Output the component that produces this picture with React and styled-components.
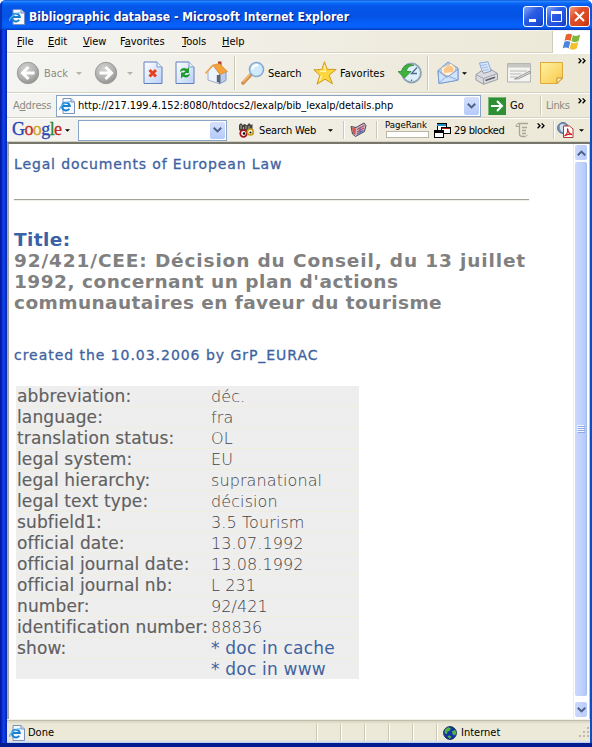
import React from 'react';
import styled, { createGlobalStyle } from 'styled-components';

const ui = '"DejaVu Sans Condensed", "DejaVu Sans", sans-serif';
const page = '"DejaVu Sans", sans-serif';

const Global = createGlobalStyle`
  * { box-sizing: border-box; }
  body { margin: 0; background: #fff; font: 11px ${ui}; color: #000; }
  svg { display: block; flex: none; }
`;

const Window = styled.div`
  width: 592px;
  height: 747px;
  display: flex;
  flex-direction: column;
  overflow: hidden;
  border-radius: 6px 6px 0 0;
  background: #0a3ad8;
`;

const TitleBar = styled.header`
  height: 30px;
  flex: none;
  display: flex;
  align-items: center;
  padding: 3px 2px 0 9px;
  background: linear-gradient(#0a54dc 0, #2f8cff 1px, #0a6af8 3px, #0558ea 6px, #0453e4 16px, #0660fb 24px, #0660fb 27px, #0340c0 30px);
  box-shadow: inset 2px 0 1px #0831b8;
`;

const TitleText = styled.h1`
  flex: 1;
  margin: 0 0 0 4px;
  color: #fff;
  font: bold 12px ${ui};
  letter-spacing: 0.04px;
  text-shadow: 1px 1px 1px #0a1883;
  white-space: nowrap;
`;

const WinButton = styled.button`
  width: 21px;
  height: 21px;
  margin: 0 0 0 2px;
  padding: 0;
  display: grid;
  place-items: center;
  border: 1px solid #fff;
  border-radius: 3px;
  background: ${p => p.$close
    ? 'linear-gradient(135deg, #f0a080, #e0502c 35%, #d8441c 75%, #b8300c)'
    : 'linear-gradient(135deg, #86a8f8, #2c5ce4 40%, #1f50dc 75%, #1038b0)'};
`;

const Frame = styled.div`
  flex: 1;
  min-height: 0;
  display: flex;
  flex-direction: column;
  padding: 0 2px 4px 7px;
  background:
    linear-gradient(90deg, #0019a4 0 1px, #0a2fd0 2px, #1048ee 4px, #0a32d0 5px, #0626b8 7px, #0a3ad8 7px 590px, #0a4fc4 590px) 0 0 / 100% calc(100% - 4px) no-repeat,
    linear-gradient(#0a3ad8, #001c90);
`;

const Bar = styled.div`
  height: ${p => p.$h}px;
  flex: none;
  display: flex;
  align-items: center;
  background: linear-gradient(90deg, #f4f4f2, #eeebdd 70%, #ece9d8);
  border-top: 1px solid ${p => (p.$first ? '#f4f3ee' : '#fff')};
  border-bottom: 1px solid #d5d2c2;
`;

const MenuItem = styled.span`
  width: ${p => p.$w}px;
  flex: none;
  white-space: nowrap;
  &::first-letter { text-decoration: ${p => (p.$plain ? 'none' : 'underline')}; }
  &:first-child { margin-left: 10px; }
`;

const FlagBox = styled.div`
  width: 38px;
  height: 22px;
  margin-left: auto;
  display: grid;
  place-items: center;
  background: #fff;
  border-left: 1px solid #d0cdbd;
`;

/* A toolbar entry: $gap is the space before it, $w its own width. */
const Slot = styled.span`
  flex: none;
  width: ${p => p.$w}px;
  margin-left: ${p => p.$gap || 0}px;
  display: flex;
  align-items: center;
  white-space: nowrap;
  letter-spacing: ${p => p.$ls || 0}px;
  color: ${p => (p.$dim ? '#8d8b80' : '#000')};
`;

const Chevron = styled(Slot)`
  align-self: flex-start;
  margin-top: ${p => p.$top}px;
`;

const Separator = styled.i`
  flex: none;
  width: 2px;
  align-self: stretch;
  margin: ${p => p.$inset || 2}px 0 ${p => p.$inset || 2}px ${p => p.$gap}px;
  border-left: 1px solid #cbc8b6;
  border-right: 1px solid #fff;
`;

const Field = styled.div`
  flex: none;
  width: ${p => p.$w}px;
  height: ${p => p.$h}px;
  margin-left: ${p => p.$gap}px;
  padding: 1px;
  display: flex;
  align-items: center;
  justify-content: space-between;
  background: #fff;
  border: 1px solid #8aa4c8;
`;

const Url = styled.span`
  flex: 1;
  margin-left: 3px;
  letter-spacing: -0.05px;
  white-space: nowrap;
`;

const DropButton = styled.span`
  width: 15px;
  align-self: stretch;
  display: grid;
  place-items: center;
  border-radius: 2px;
  background: linear-gradient(#d5e0fe, #b4caf8);
`;

const GoogleLogo = styled.span`
  flex: none;
  width: 49px;
  margin-left: 5px;
  padding-bottom: 2px;
  font: 18px/20px "Liberation Serif", serif;
  letter-spacing: -0.6px;
  white-space: nowrap;
  -webkit-text-stroke: 0.3px;
`;
const Tint = styled.span`color: ${p => p.$c};`;

const Rank = styled.span`
  flex: none;
  width: 44px;
  margin: 0 0 3px 7px;
  font-size: 9.5px;
  line-height: 11px;
  white-space: nowrap;
  &::after {
    content: '';
    display: block;
    width: 41px;
    height: 5px;
    margin: 1px 0 0 1px;
    background: #fff;
    border: 1px solid #b9b6a6;
  }
`;

const Body = styled.div`
  flex: 1;
  min-height: 0;
  display: flex;
  background: #fff;
  border: solid #7c7a6c;
  border-width: 2px 0 0 2px;
  border-top-color: #77766c;
  border-left-color: #aaa99c;
`;

const Content = styled.main`
  flex: 1;
  min-width: 0;
  padding: 11px 0 0 5px;
  font-family: ${page};
`;

const Blue = styled.p`
  margin: 0;
  font-size: 14px;
  line-height: 18px;
  letter-spacing: ${p => p.$ls}px;
  color: #3e639f;
  -webkit-text-stroke: 0.3px;
  white-space: nowrap;
`;

const Rule = styled.hr`
  width: 515px;
  height: 2px;
  margin: 26px 0 28px;
  border: 0;
  border-top: 1px solid #a3a394;
  border-bottom: 1px solid #efeee6;
`;

const Heading = styled.h2`
  margin: 0 0 33px;
  font: bold 18.5px/21px ${page};
`;

const Line = styled.span`
  display: block;
  height: 21px;
  white-space: nowrap;
  color: ${p => (p.$blue ? '#3a62a6' : '#808080')};
  letter-spacing: ${p => p.$ls}px;
`;

const Grid = styled.dl`
  width: 343px;
  margin: 22px 0 0 2px;
  display: grid;
  grid-template-columns: 193px 149px;
  grid-auto-rows: 20px;
  gap: 1px;
  background: #efeddc;
`;

const Term = styled.dt`
  padding-left: 1px;
  font-size: 17px;
  line-height: 21px;
  letter-spacing: 0.13px;
  white-space: nowrap;
  color: #606060;
  background: #eee;
  -webkit-text-stroke: 0.15px;
`;

const Value = styled.dd`
  margin: 0;
  padding-left: 1px;
  font-size: ${p => (p.$link ? 17 : 16)}px;
  font-weight: ${p => (p.$link ? 400 : 200)};
  line-height: 21px;
  letter-spacing: ${p => (p.$link ? 0.2 : 0.1)}px;
  white-space: nowrap;
  color: ${p => (p.$link ? '#3e639f' : '#444')};
  background: #eee;
`;

const ScrollBar = styled.div`
  width: 17px;
  margin-right: 0;
  display: flex;
  flex-direction: column;
  padding: 1px 2px 2px 1px;
  background: #fff;
  border-left: 1px solid #eeeddf;
  border-right: 1px solid #b4c4e4;
`;

const ScrollEnd = styled.span`
  height: 15px;
  display: grid;
  place-items: center;
  border-radius: 2px;
  background: linear-gradient(90deg, #cdd9fd, #b9ccfa);
`;

const Thumb = styled.span`
  height: 534px;
  margin-top: 2px;
  display: grid;
  place-items: center;
  border-radius: 2px;
  background: linear-gradient(90deg, #cbd7fd, #c0d1fc 60%, #b2c8f6);
  border-right: 1px solid #a4bcec;
`;

const Track = styled.span`flex: 1;`;

const Status = styled.footer`
  height: 24px;
  flex: none;
  display: flex;
  align-items: center;
  padding: 2px 0 0 2px;
  background: linear-gradient(#aaa793 0, #d8d4c3 1px, #ece9d8 4px, #ece9d8 20px, #d3dcec 22px, #a9c2f4);
  border-top: 1px solid #f4f3ea;
`;

const Grow = styled.span`flex: 1;`;

const Down = ({ dim, size = 6 }) => (
  <svg width={size} height="3" viewBox="0 0 6 3"><path d="M0 0h6L3 3z" fill={dim ? '#b5b3a8' : '#000'} /></svg>
);
const Vee = ({ up }) => (
  <svg width="9" height="6" viewBox="0 0 9 6"><path d={up ? 'M.8 5.2 4.5 1.6 8.2 5.2' : 'M.8.8 4.5 4.4 8.2.8'} fill="none" stroke="#4d6185" strokeWidth="2" /></svg>
);
const More = () => (
  <svg width="8" height="6" viewBox="0 0 8 6"><path d="M.6.4 3 2.8.6 5.2M4.6.4 7 2.8 4.6 5.2" fill="none" stroke="#000" strokeWidth="1.3" /></svg>
);
const IeIcon = () => (
  <svg width="16" height="16" viewBox="0 0 16 16">
    <path d="M4 .5h8l3.5 3.5v11.5H4z" fill="#f4f8ff" stroke="#7d90bb" />
    <path d="M12 .5V4h3.5" fill="#c6d5f2" stroke="#7d90bb" />
    <path d="M10.2 10.7A3.9 3.9 0 1 1 10.8 8H4" fill="none" stroke="#1b7fd0" strokeWidth="2" />
    <path d="M1 11.8C-.5 9.5 7 2.5 11.5 4" fill="none" stroke="#55b4ee" strokeWidth="1.2" />
  </svg>
);
const Flag = () => (
  <svg width="20" height="18" viewBox="0 0 20 18">
    <path d="M4 1.6C6 .3 8 .3 10 1.6L8.5 8C6.5 6.8 4.5 6.8 2.5 8z" fill="#e8622c" />
    <path d="M10.9 2C13 3.3 15.5 3.2 18.2 1.6L16.6 8C14.4 9.5 11.8 9.4 9.4 8.3z" fill="#7cb83a" />
    <path d="M2.3 9C4.3 7.8 6.3 7.8 8.3 9L6.7 15.4C4.7 14.2 2.7 14.2.7 15.4z" fill="#4a86dc" />
    <path d="M9.2 9.4C11.4 10.5 14 10.6 16.3 9.1L14.7 15.6C12.3 17.2 9.8 16.900 7.600 15.800z" fill="#f4bf2a" />
  </svg>
);
const RoundArrow = ({ back }) => (
  <svg width="24" height="24" viewBox="0 0 24 24">
    <defs><radialGradient id="orb" cx=".4" cy=".3" r=".75"><stop offset="0" stopColor="#d2d2d0" /><stop offset=".6" stopColor="#b2b2b0" /><stop offset="1" stopColor="#8c8c8a" /></radialGradient></defs>
    <circle cx="12" cy="12" r="10.7" fill="url(#orb)" stroke="#9b9b99" />
    <path d={back ? 'M18.500 12H7M12.500 6 6.500 12 12.500 18' : 'M5.500 12h11.500M11.500 6 17.500 12 11.500 18'} fill="none" stroke="#fff" strokeWidth="3" />
  </svg>
);
const Sheet = ({ children }) => (
  <svg width="20" height="24" viewBox="0 0 20 24">
    <defs><linearGradient id="sheet" x2="1" y2="1"><stop offset="0" stopColor="#fff" /><stop offset="1" stopColor="#b9d0f6" /></linearGradient></defs>
    <path d="M1 1h13l5 5v16.500H1z" fill="url(#sheet)" stroke="#5f7fbd" />
    <path d="M14 1v5h5" fill="#e9f1ff" stroke="#7f9bd0" />
    {children}
  </svg>
);
const Home = () => (
  <svg width="24" height="24" viewBox="0 0 24 24">
    <path d="M14 .5h3.500v6H14z" fill="#b03a30" />
    <path d="M4 10.500 9 4.500l6.500 8v10.300L4 19z" fill="#eef4fd" stroke="#8a9cc4" strokeWidth=".8" />
    <path d="M15.500 12 22 10v9.500l-6.500 3.300z" fill="#b9cdef" stroke="#7085b8" strokeWidth=".8" />
    <path d="M12.800 14h3.700v8l-3.700-1z" fill="#5b6478" />
    <path d="M9 4 15.500 2.500 23.500 10.500 16 13.500z" fill="#f5a13c" stroke="#d08426" strokeWidth=".6" />
    <path d="M9 4 1.500 12.500" fill="none" stroke="#f0a54a" strokeWidth="1.800" />
  </svg>
);
const Magnifier = () => (
  <svg width="24" height="24" viewBox="0 0 24 24">
    <path d="M2 22 10 13.500" stroke="#d0904a" strokeWidth="3.600" strokeLinecap="round" />
    <path d="M1.800 21 9 13.500" stroke="#f4bd73" strokeWidth="1.500" />
    <circle cx="15.500" cy="8.500" r="7" fill="#cfeafc" stroke="#8aa9cf" strokeWidth="1.600" />
    <path d="M11.500 8.500A4.500 4.500 0 0 1 17 4.300" stroke="#fff" strokeWidth="2.200" fill="none" />
  </svg>
);
const Star = () => (
  <svg width="24" height="24" viewBox="0 0 24 24">
    <path d="M11.500.800 14.300 8.300 23.200 8.400 16.200 14.200 19.500 22.800 12 18.200 4 23.200 6.800 14.300.800 8.800 8.700 8.500z" fill="#fbd63c" stroke="#cf9a26" />
    <path d="M11.500 4 12.500 10.500 7 10.200M6.500 20 8.700 14.500" stroke="#fff5b0" strokeWidth="1.300" fill="none" />
  </svg>
);
const History = () => (
  <svg width="24" height="24" viewBox="0 0 24 24">
    <circle cx="13.500" cy="12" r="9.400" fill="#dff0fb" stroke="#8fa5b4" strokeWidth="2" />
    <path d="M19 6.500 13.500 12.500h5.500M13.500 18.500v1.500" stroke="#4c6c90" strokeWidth="1.300" fill="none" />
    <path d="M0 10.500h3.500C5 4.500 10 2 16 4.500 11 4.500 8.800 7 8.500 10.500H13L6.500 17z" fill="#3fb23c" stroke="#2d8a32" strokeWidth=".8" />
  </svg>
);
const Mail = () => (
  <svg width="23" height="24" viewBox="0 0 23 24">
    <path d="M1 9.500 11 1 21 7v12L2 22.500z" fill="#a9cbf6" stroke="#7a9bd2" />
    <path d="M4 7 14 2.500 18.500 6.500 18 12 11 15.500 5 12z" fill="#fff3e2" stroke="#cdb48e" strokeWidth=".7" />
    <path d="M6.500 8 12 4l4.500 2.500v4.500L7 12z" fill="#f9b76a" opacity=".75" />
    <path d="M1 9.800 10 16.300 21 8.300v10.900L2 22.500z" fill="#cfe3fd" stroke="#7a9bd2" />
    <path d="M2 22 10 14.800 21 19" fill="none" stroke="#8babdf" />
  </svg>
);
const Printer = () => (
  <svg width="24" height="24" viewBox="0 0 24 24">
    <path d="M4.500 2 13 .8 16.500 11 8 13z" fill="#d7e7fd" stroke="#8fa9d6" />
    <path d="M6 4.500 12 3.600M7 7 13 6M8 9.500 13.700 8.500" stroke="#9fb9e2" />
    <path d="M1 13.500 7 9.500 8.500 12.300 15.800 10.300 16 8.500 22.500 12.500v6L8.500 23.300 1 19z" fill="#dadbe0" stroke="#9a9ca2" />
    <path d="M1 13.500 8.500 17.500 22.500 12.500M8.500 17.500v5.800" fill="none" stroke="#a0a2a8" />
    <path d="M10.500 19.500 20 16.200" stroke="#5a5d65" strokeWidth="1.600" />
  </svg>
);
const EditPage = () => (
  <svg width="24" height="20" viewBox="0 0 24 20">
    <path d="M.5.5h23v18.500H.5z" fill="#f3f3f1" stroke="#b5b5b2" />
    <path d="M1 1h22v3.500H1z" fill="#c6c6c3" />
    <path d="M3 8h17M3 11h11M3 14h7" stroke="#b9b9b6" />
    <path d="M23 8 11 14.200 7.500 16 11.500 15.800 23.500 10z" fill="#ddd" stroke="#858582" strokeWidth=".8" />
  </svg>
);
const Note = () => (
  <svg width="23" height="22" viewBox="0 0 23 22">
    <defs><linearGradient id="note" x2="1" y2="1"><stop offset="0" stopColor="#fff1a4" /><stop offset="1" stopColor="#f8c947" /></linearGradient></defs>
    <path d="M.5.5h22v15.500L17 21.500H.5z" fill="url(#note)" stroke="#dda83c" />
    <path d="M17 21.500V16h5.500z" fill="#fff3bc" stroke="#c68d2c" />
  </svg>
);
const GoIcon = () => (
  <svg width="18" height="18" viewBox="0 0 18 18">
    <path d="M0 0h18v18H0z" fill="#2f8f36" /><path d="M.5 17.500V.5h17" stroke="#73bb76" fill="none" />
    <path d="M3 9h10.500M9 4l5 5-5 5" fill="none" stroke="#fff" strokeWidth="2" />
  </svg>
);
const Binoculars = () => (
  <svg width="17" height="16" viewBox="0 0 17 16">
    <path d="M1 8V3l2-2 1.500 2L7 2l2 1.500L11 1l2 2 1.500-1v6l-2 2H4z" fill="#46423c" />
    <path d="M3 3v4M5.500 5v3M8 4v3M11 4v3" stroke="#d8d4c8" strokeWidth=".7" />
    <circle cx="5.500" cy="11.500" r="3.300" fill="#fff" stroke="#a4141c" strokeWidth="1.700" />
    <circle cx="12.300" cy="10" r="3" fill="#fffbe0" stroke="#c69a16" strokeWidth="1.700" />
    <circle cx="6" cy="11.500" r="1.200" /><circle cx="12.500" cy="10.500" r="1" />
  </svg>
);
const Book = () => (
  <svg width="17" height="16" viewBox="0 0 17 16">
    <path d="M1 4.500 6 5.500 14 1 16 3.500 14.500 9.500 5.500 14.500 2.500 12z" fill="#cbbccb" stroke="#3c3644" strokeWidth=".9" />
    <path d="M2 5.500 6 6.500 5.500 13 3 11.500z" fill="#d4574c" />
    <path d="M7 7.500 14.500 3.500M7 10 14 6" stroke="#c4485c" strokeWidth="1.200" />
    <path d="M7 12 13.500 8.500M10 5.500v5" stroke="#4b5fa8" strokeWidth="1.100" />
  </svg>
);
const Popups = () => (
  <svg width="17" height="15" viewBox="0 0 17 15" shapeRendering="crispEdges">
    <path d="M3.500.5h9v7h-9z" fill="#fff" stroke="#000" /><path d="M3 1h9v2H3z" fill="#1c8fc8" />
    <path d="M7.500 4.500h9v6h-9z" fill="#fff" stroke="#000" /><path d="M8 5h8v1H8z" fill="#b01c14" />
    <path d="M.5 7.500h9v7h-9z" fill="#fff" stroke="#000" /><path d="M1 8h8v2H1z" fill="#000" />
  </svg>
);
const Fill = () => (
  <svg width="14" height="16" viewBox="0 0 14 16">
    <path d="M3 1.500h10M4.500 1.500v10.500q0 2.500 3 2.500h3M7 5.500h5M7 8.500h4M7 11.500h4" fill="none" stroke="#aaa797" strokeWidth="1.300" />
    <path d="M1 4.500h3M3 1.500Q1 2 1 4.500M10.500 14.500l2-1.500" fill="none" stroke="#aaa797" />
  </svg>
);
const Pdf = () => (
  <svg width="17" height="16" viewBox="0 0 17 16">
    <circle cx="6" cy="6" r="5.400" fill="#7896bd" stroke="#52698c" /><path d="M3 3q3-2 5 0L6 6l3 2-4 2Q2 7 3 3" fill="#d4deec" />
    <path d="M6.500 4h6l3.500 3v8.500H6.500z" fill="#fff" stroke="#b0392e" />
    <path d="M7.500 14C10 12.500 11 9 10.500 6.500 11 10 13 12 15 12.500 12 11.800 9.500 12.500 7.500 14" fill="none" stroke="#d2191c" strokeWidth="1.300" />
  </svg>
);
const Globe = () => (
  <svg width="14" height="14" viewBox="0 0 14 14">
    <circle cx="7" cy="7" r="6.400" fill="#1336a4" stroke="#0b1c4c" strokeWidth=".9" />
    <path d="M2 3.500 5 1.200 8 2 6.500 5 4.500 5.500 4 8 1.500 7.500zM9 5l3.500-1 .8 4-2.300 1.500L9.500 8zM4.500 10 7 9.500 8.500 11 6.500 13z" fill="#4fb548" />
  </svg>
);
const Grip = () => (
  <svg width="11" height="11" viewBox="0 0 11 11">
    <path d="M8 0h2v2H8zM4 4h2v2H4zM8 4h2v2H8zM0 8h2v2H0zM4 8h2v2H4zM8 8h2v2H8z" fill="#bdb9a4" />
  </svg>
);

const menus = [['File', 31], ['Edit', 35], ['View', 37], ['Favorites', 62], ['Tools', 40], ['Help', 30]];

const rows = [
  ['abbreviation:', 'déc.'],
  ['language:', 'fra'],
  ['translation status:', 'OL'],
  ['legal system:', 'EU'],
  ['legal hierarchy:', 'supranational'],
  ['legal text type:', 'décision'],
  ['subfield1:', '3.5 Tourism'],
  ['official date:', '13.07.1992'],
  ['official journal date:', '13.08.1992'],
  ['official journal nb:', 'L 231'],
  ['number:', '92/421'],
  ['identification number:', '88836'],
  ['show:', '* doc in cache', true],
  ['', '* doc in www', true],
];

export default function App() {
  return (
    <>
      <Global />
      <Window>
        <TitleBar>
          <IeIcon />
          <TitleText>Bibliographic database - Microsoft Internet Explorer</TitleText>
          <WinButton><svg width="13" height="13"><path d="M2 9h7v3H2z" fill="#fff" /></svg></WinButton>
          <WinButton><svg width="13" height="13"><path d="M1.500 2.500h10v9h-10z" fill="none" stroke="#fff" /><path d="M1 1h11v3H1z" fill="#fff" /></svg></WinButton>
          <WinButton $close><svg width="13" height="13"><path d="M2 2l9 9M11 2l-9 9" stroke="#fff" strokeWidth="2" /></svg></WinButton>
        </TitleBar>
        <Frame>
          <Bar $h={23} $first>
            {menus.map(([name, w]) => (
              <MenuItem key={name} $w={w} $plain={name === 'Favorites'}>
                {name === 'Favorites' ? <>F<u>a</u>vorites</> : name}
              </MenuItem>
            ))}
            <FlagBox><Flag /></FlagBox>
          </Bar>

          <Bar $h={40}>
            <Slot $gap={9} $w={24}><RoundArrow back /></Slot>
            <Slot $gap={4} $w={24} $dim>Back</Slot>
            <Slot $gap={8} $w={6}><Down dim /></Slot>
            <Slot $gap={12} $w={24}><RoundArrow /></Slot>
            <Slot $gap={9} $w={6}><Down dim /></Slot>
            <Slot $gap={10} $w={20}><Sheet><path d="M6.500 9l6.500 6.500M13 9l-6.500 6.500" stroke="#e8401c" strokeWidth="3" /></Sheet></Slot>
            <Slot $gap={12} $w={20}>
              <Sheet>
                <path d="M5 11C5 7.500 9 6 12 8l2-2v6H8.500l2-2C9 9 7 9.500 5 11z" fill="#1f9a2c" />
                <path d="M15 12.500C15 16 11 17.500 8 15.500l-2 2v-6h5.500l-2 2C11 14.500 13 14 15 12.500z" fill="#1f9a2c" />
              </Sheet>
            </Slot>
            <Slot $gap={9} $w={24}><Home /></Slot>
            <Separator $gap={6} />
            <Slot $gap={5} $w={24}><Magnifier /></Slot>
            <Slot $gap={3} $w={36} $ls={-0.1}>Search</Slot>
            <Slot $gap={9} $w={24}><Star /></Slot>
            <Slot $gap={3} $w={48}>Favorites</Slot>
            <Slot $gap={10} $w={24}><History /></Slot>
            <Separator $gap={5} />
            <Slot $gap={8} $w={23}><Mail /></Slot>
            <Slot $gap={2} $w={6}><Down size={5} /></Slot>
            <Slot $gap={7} $w={24}><Printer /></Slot>
            <Slot $gap={8} $w={24}><EditPage /></Slot>
            <Slot $gap={9} $w={23}><Note /></Slot>
            <Chevron $gap={15} $w={8} $top={4}><More /></Chevron>
          </Bar>

          <Bar $h={25}>
            <Slot $gap={6} $w={43} $dim $ls={-0.15}><span>A<u>d</u>dress</span></Slot>
            <Field $w={425} $h={22} $gap={0}>
              <Slot $gap={1} $w={16}><IeIcon /></Slot>
              <Url>http://217.199.4.152:8080/htdocs2/lexalp/bib_lexalp/details.php</Url>
              <DropButton><Vee /></DropButton>
            </Field>
            <Slot $gap={7} $w={18}><GoIcon /></Slot>
            <Slot $gap={4} $w={16}>Go</Slot>
            <Separator $gap={14} />
            <Slot $gap={4} $w={27} $dim $ls={-0.4}>Links</Slot>
            <Chevron $gap={5} $w={8} $top={4}><More /></Chevron>
          </Bar>

          <Bar $h={24}>
            <GoogleLogo>
              <Tint $c="#2846b4">G</Tint><Tint $c="#c22a22">o</Tint><Tint $c="#d0a21c">o</Tint><Tint $c="#2846b4">g</Tint><Tint $c="#2c8a34">l</Tint><Tint $c="#c22a22">e</Tint>
            </GoogleLogo>
            <Slot $gap={4} $w={6}><Down size={5} /></Slot>
            <Field $w={149} $h={21} $gap={7}><Grow /><DropButton><Vee /></DropButton></Field>
            <Slot $gap={11} $w={17}><Binoculars /></Slot>
            <Slot $gap={4} $w={58} $ls={-0.15}>Search Web</Slot>
            <Slot $gap={11} $w={6}><Down size={5} /></Slot>
            <Separator $gap={9} />
            <Slot $gap={5} $w={17}><Book /></Slot>
            <Separator $gap={9} />
            <Rank>PageRank</Rank>
            <Slot $gap={5} $w={17}><Popups /></Slot>
            <Slot $gap={3} $w={55} $ls={-0.35}>29 blocked</Slot>
            <Slot $gap={6} $w={14}><Fill /></Slot>
            <Chevron $gap={8} $w={8} $top={4}><More /></Chevron>
            <Separator $gap={8} />
            <Slot $gap={2} $w={17}><Pdf /></Slot>
            <Slot $gap={5} $w={5}><Down size={5} /></Slot>
          </Bar>

          <Body>
            <Content>
              <Blue $ls={0.87}>Legal documents of European Law</Blue>
              <Rule />
              <Heading>
                <Line $blue $ls={0.4}>Title:</Line>
                <Line $ls={0.86}>92/421/CEE: Décision du Conseil, du 13 juillet</Line>
                <Line $ls={0.5}>1992, concernant un plan d'actions</Line>
                <Line $ls={0.42}>communautaires en faveur du tourisme</Line>
              </Heading>
              <Blue $ls={0.96}>created the 10.03.2006 by GrP_EURAC</Blue>
              <Grid>
                {rows.map(([label, value, link]) => (
                  <React.Fragment key={value + label}>
                    <Term>{label}</Term>
                    <Value $link={link}>{value}</Value>
                  </React.Fragment>
                ))}
              </Grid>
            </Content>
            <ScrollBar>
              <ScrollEnd><Vee up /></ScrollEnd>
              <Thumb><svg width="8" height="8"><path d="M0 .5h7M0 2.500h7M0 4.500h7M0 6.500h7" stroke="#f3f7ff" /><path d="M1 1.500h7M1 3.500h7M1 5.500h7M1 7.500h7" stroke="#8da9e4" /></svg></Thumb>
              <Track />
              <ScrollEnd><Vee /></ScrollEnd>
            </ScrollBar>
          </Body>

          <Status>
            <IeIcon />
            <Slot $gap={3} $w={60}>Done</Slot>
            <Grow />
            {[0, 22, 22, 22, 22, 22].map((gap, i) => <Separator key={i} $gap={gap} />)}
            <Slot $gap={5} $w={14}><Globe /></Slot>
            <Slot $gap={4} $w={118}>Internet</Slot>
            <Slot $w={11}><Grip /></Slot>
          </Status>
        </Frame>
      </Window>
    </>
  );
}
